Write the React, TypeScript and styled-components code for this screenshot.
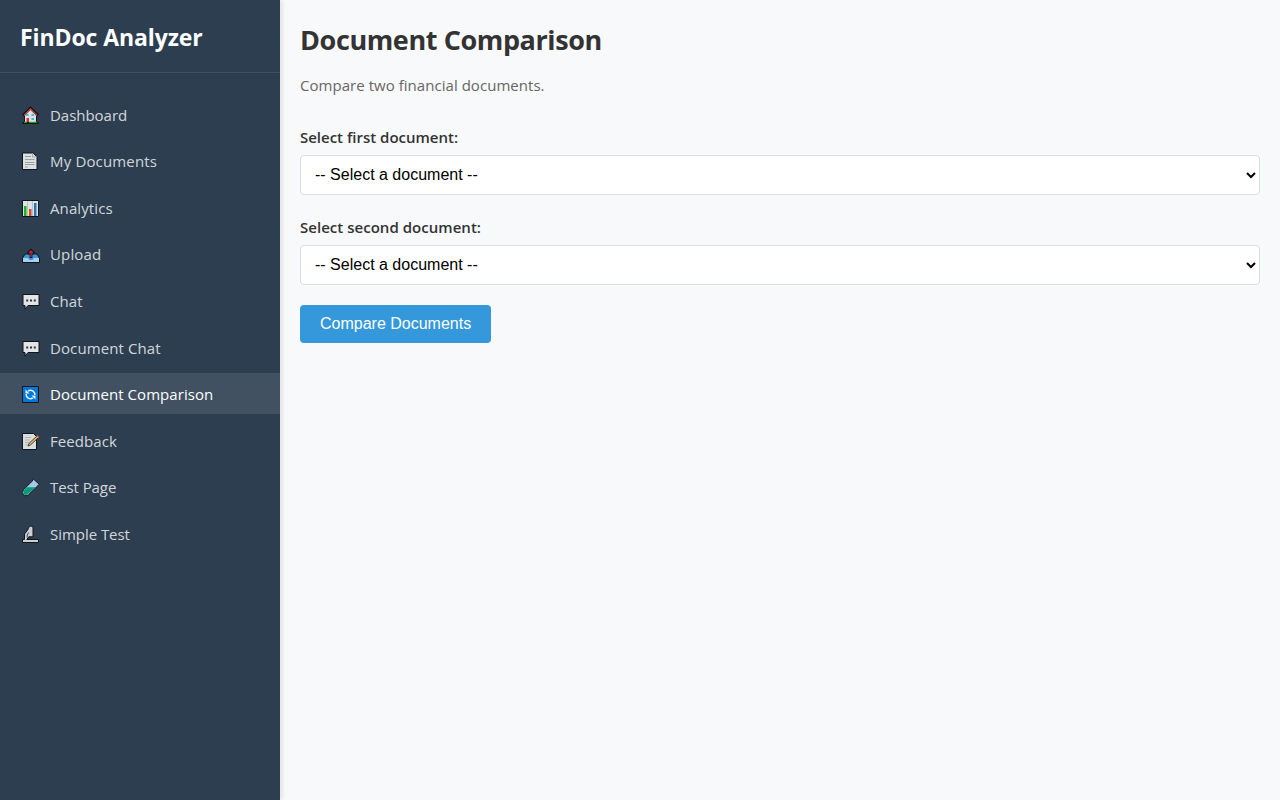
import React from "react";
import styled, { createGlobalStyle } from "styled-components";

const GlobalStyle = createGlobalStyle`
  * { box-sizing: border-box; }
  body {
    margin: 0;
    background: #f8f9fb;
    color: #333;
    font-family: "Segoe UI", "Open Sans", "Noto Sans", sans-serif;
  }
`;

const Page = styled.div`
  display: flex;
  min-height: 100vh;
`;

const Sidebar = styled.aside`
  width: 280px;
  flex-shrink: 0;
  background: #2c3e50;
  box-shadow: 2px 0 5px rgba(0, 0, 0, 0.1);
`;

const Brand = styled.div`
  height: 73px;
  padding: 20px;
  border-bottom: 1px solid rgba(255, 255, 255, 0.1);
  color: #fff;
  font-size: 23px;
  font-weight: 700;
  line-height: 35px;
  letter-spacing: -0.09px;
  white-space: nowrap;
`;

const Nav = styled.nav`
  display: flex;
  flex-direction: column;
  gap: 5px;
  padding: 20px 0;
`;

const NavItem = styled.a<{ $active?: boolean; $spacing: number }>`
  display: flex;
  align-items: center;
  height: 41.6px;
  padding: 1.5px 20px 0;
  gap: 9px;
  background: ${(p) => (p.$active ? "rgba(255,255,255,0.1)" : "transparent")};
  color: ${(p) => (p.$active ? "#fff" : "rgba(255,255,255,0.8)")};
  font-size: 15px;
  line-height: 24px;
  letter-spacing: ${(p) => p.$spacing}px;
  white-space: nowrap;
`;

const NavIcon = styled.svg`
  width: 21px;
  height: 20px;
  flex-shrink: 0;
`;

const Main = styled.main`
  flex: 1;
  padding: 20px;
`;

const Title = styled.h1`
  margin: 0 0 20px;
  font-size: 27px;
  font-weight: 700;
  line-height: 40px;
  letter-spacing: -0.4px;
`;

const Intro = styled.p`
  margin: -8px 0 27.4px;
  color: #666;
  font-size: 15px;
  line-height: 26px;
  letter-spacing: 0.04px;
`;

const Field = styled.div`
  display: flex;
  flex-direction: column;
  height: 69.6px;
  margin-bottom: 20px;
`;

const Label = styled.label<{ $spacing: number }>`
  height: 30px;
  color: #333;
  font-size: 15px;
  font-weight: 600;
  line-height: 24px;
  letter-spacing: ${(p) => p.$spacing}px;
`;

const Select = styled.select`
  width: 100%;
  height: 40px;
  padding: 0 10px;
  flex-shrink: 0;
  border: 1px solid #ddd;
  border-radius: 4px;
  background-color: #fff;
  color: #000;
  font: 16px "Liberation Sans", Arial, sans-serif;
`;

const Button = styled.button`
  display: block;
  width: 191px;
  height: 38px;
  padding: 0 20px;
  border: 0;
  border-radius: 4px;
  background: #3498db;
  color: #fff;
  font: 16px "Liberation Sans", Arial, sans-serif;
  white-space: nowrap;
`;

const ink = { stroke: "#111418", strokeWidth: 1 };

const HomeIcon = () => (
  <>
    <path d="M4.5 10v8h12v-8l-6-6z" fill="#dfe1e4" {...ink} />
    <path d="M3 10.5 10.5 3l7.500 7.500" fill="none" stroke="#111418" strokeWidth="2.600" />
    <path d="M4 10.500 10.500 4l6.500 6.500" fill="none" stroke="#c94b37" strokeWidth="1.300" />
    <path d="M6 9h2.500v2H6zM11.500 9H14v2h-2.500zM11.500 13H14v2h-2.500z" fill="#45b8e6" />
    <path d="M6.500 13H9v4.500H6.500z" fill="#c93d30" />
    <path d="M2.500 17h16v2h-16z" fill="#111418" />
    <path d="M4 17.300h3M9 17.300h8" stroke="#16a60c" strokeWidth="1.200" />
  </>
);

const PageIcon = () => (
  <>
    <path d="M2.500 2h10.500l4 4v12.500H2.500z" fill="#dce0e3" {...ink} />
    <path d="M12.500 2v4H17" fill="none" stroke="#a3a8ac" />
    <path d="M5 5.500h6M5 8.500h9.500M5 11.500h9.500M5 13.500h9.500M5 16h3" stroke="#9ba0a4" />
  </>
);

const ChartIcon = () => (
  <>
    <path d="M2.500 2.500h16v16h-16z" fill="#dfe2e6" {...ink} />
    <path d="M7.500 3v15M12.500 3v15" stroke="#bcc0c7" />
    <path d="M4 8h2.500v10H4z" fill="#18b719" />
    <path d="M9 11h2.500v7H9z" fill="#d84a29" />
    <path d="M14 5h2.500v13H14z" fill="#2676bb" />
  </>
);

const UploadIcon = () => (
  <>
    <path d="m5 10-2.500 4v4.500h17V14L17 10z" fill="#3f94d8" {...ink} />
    <path d="M3 14h5l1.500 2h3l1.500-2h5v4H3z" fill="#a8d0ed" />
    <path d="M11 14V6.500M8 9.500l3-3 3 3" fill="none" stroke="#111418" strokeWidth="2.800" />
    <path d="M11 13V7M9 9l2-2 2 2" fill="none" stroke="#c52235" strokeWidth="1.400" />
  </>
);

const ChatIcon = () => (
  <>
    <path d="M3 3.500h16v11H8L5 18v-3.500H3z" fill="#e2e4e7" {...ink} strokeLinejoin="round" />
    <path d="M6.200 8.500h2v2h-2zM10 8.500h2v2h-2zM13.800 8.500h2v2h-2z" fill="#34383d" />
  </>
);

const CompareIcon = () => (
  <>
    <path d="M2.500 2.500h16v16h-16z" fill="#0078d7" {...ink} />
    <path
      d="M8 7.100a4.300 4.300 0 0 1 6.800 3.900M13 13.900a4.300 4.300 0 0 1-6.800-3.900"
      fill="none"
      stroke="#e7f1fb"
      strokeWidth="1.400"
    />
    <path d="M5.500 5.500v4h4zM15.500 15.500v-4h-4z" fill="#e7f1fb" />
  </>
);

const MemoIcon = () => (
  <>
    <path d="M2.500 2.500h11l3 3v13h-14z" fill="#d9dde0" {...ink} />
    <path d="M5 6.500h6M5 9h5M5 11.500h4M5 14h3" stroke="#aeb3b7" />
    <path d="m8 15 1.200-2.800 8.300-7.700 1.500 1.500-8.300 7.800z" fill="#e8b558" stroke="#272625" strokeWidth=".8" />
    <path d="m17 4.500 2 2" stroke="#c95b55" strokeWidth="1.500" />
  </>
);

const TubeIcon = () => (
  <>
    <path
      d="m13.200 1.800 6 5.500-1.700 1.700L8.500 17.800Q6 20 3.500 17.800t0-5L12.300 4z"
      fill="#a6c9e6"
      {...ink}
      strokeLinejoin="round"
    />
    <path d="M7 10.200h8.500l-7.600 6.900Q6 18.800 4.200 17.200t0-3.900z" fill="#079b7c" />
  </>
);

const ScopeIcon = () => (
  <>
    <path
      d="M8.500 3.500 11 1.800l2 1.400v9.600H8.800l-2 2.700h11.700v3H2.500v-3h2V10L8 5.500z"
      fill="#ccd0d3"
      stroke="#111418"
      strokeWidth="1"
      strokeLinejoin="round"
    />
    <path d="m8.700 8.500-1.500 2.500v2.500" fill="none" stroke="#343b41" strokeWidth=".9" />
  </>
);

const items = [
  { text: "Dashboard", Icon: HomeIcon, spacing: -0.03 },
  { text: "My Documents", Icon: PageIcon, spacing: 0.16 },
  { text: "Analytics", Icon: ChartIcon, spacing: 0.1 },
  { text: "Upload", Icon: UploadIcon, spacing: 0.15 },
  { text: "Chat", Icon: ChatIcon, spacing: 0.05 },
  { text: "Document Chat", Icon: ChatIcon, spacing: 0.1 },
  { text: "Document Comparison", Icon: CompareIcon, spacing: 0.06, active: true },
  { text: "Feedback", Icon: MemoIcon, spacing: 0.06 },
  { text: "Test Page", Icon: TubeIcon, spacing: -0.08 },
  { text: "Simple Test", Icon: ScopeIcon, spacing: -0.04 },
];

export default function App() {
  return (
    <Page>
      <GlobalStyle />
      <Sidebar>
        <Brand>FinDoc Analyzer</Brand>
        <Nav>
          {items.map(({ text, Icon, spacing, active }) => (
            <NavItem key={text} $active={active} $spacing={spacing}>
              <NavIcon viewBox="0 0 21 20"><Icon /></NavIcon>
              <span>{text}</span>
            </NavItem>
          ))}
        </Nav>
      </Sidebar>
      <Main>
        <Title>Document Comparison</Title>
        <Intro>Compare two financial documents.</Intro>
        <Field>
          <Label htmlFor="first" $spacing={-0.01}>Select first document:</Label>
          <Select id="first"><option>-- Select a document --</option></Select>
        </Field>
        <Field>
          <Label htmlFor="second" $spacing={0.03}>Select second document:</Label>
          <Select id="second"><option>-- Select a document --</option></Select>
        </Field>
        <Button>Compare Documents</Button>
      </Main>
    </Page>
  );
}
